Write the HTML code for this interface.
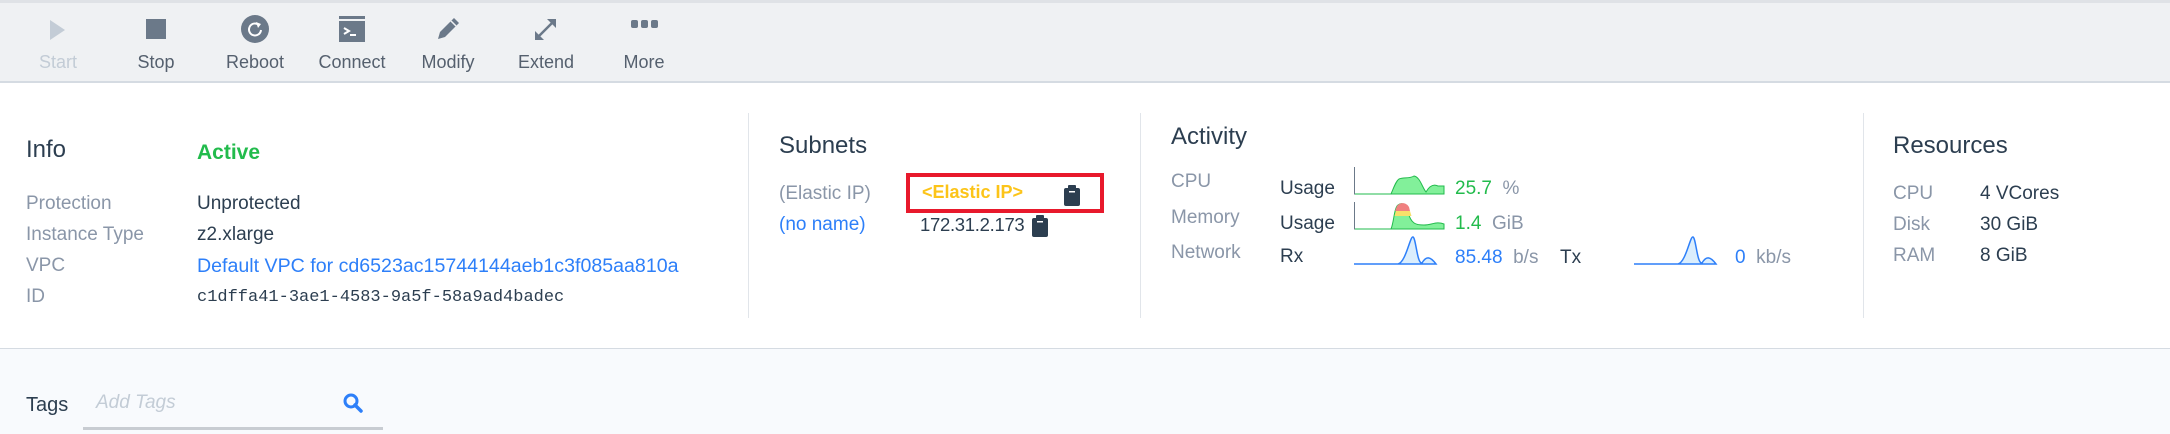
<!DOCTYPE html>
<html><head><meta charset="utf-8"><style>
*{margin:0;padding:0;box-sizing:border-box}
body{width:2170px;height:434px;overflow:hidden;background:#fff;font-family:"Liberation Sans",sans-serif;position:relative;color:#2c3e50}
.a{position:absolute;white-space:nowrap}
.tb{position:absolute;left:0;top:3px;width:2170px;height:80px;background:#eff1f3;border-bottom:2px solid #d5dbe2}
.top{position:absolute;left:0;top:0;width:2170px;height:3px;background:#dfe2e6}
.lbl{font-size:18px;color:#55606e;transform:translateX(-50%);top:52px}
.l{color:#8a96a8;font-size:19px}
.v{color:#2c3e50;font-size:19px}
.h{font-size:24px;color:#2c3e50}
.div{position:absolute;width:1px;background:#e1e5ea;top:113px;height:205px}
</style></head><body>
<div class="top"></div>
<div class="tb"></div>
<svg class="a" style="left:48px;top:18px" width="20" height="24"><path d="M2 2 L17 12 L2 22Z" fill="#c3ccd6"/></svg>
<div class="a" style="left:146px;top:19px;width:20px;height:20px;background:#6b7989"></div>
<svg class="a" style="left:241px;top:15px" width="28" height="28"><circle cx="14" cy="14" r="14" fill="#6b7989"/><path d="M18 10 A6 6 0 1 0 20 15" stroke="#fff" stroke-width="2" fill="none"/><path d="M15 7 L20 9 L17 13Z" fill="#fff"/></svg>
<svg class="a" style="left:339px;top:16px" width="26" height="26"><rect x="0" y="0" width="26" height="26" fill="#6b7989"/><rect x="0" y="3" width="26" height="2" fill="#eff1f3"/><rect x="2" y="7" width="22" height="17" fill="#6b7989"/><path d="M5 12 L10 15 L5 18" stroke="#fff" stroke-width="2" fill="none"/><rect x="11" y="18" width="6" height="2" fill="#fff"/></svg>
<svg class="a" style="left:435px;top:15px" width="27" height="27"><path d="M3 24 L5 17 L19 3 L24 8 L10 22Z" fill="#6b7989"/><path d="M16 6 L21 11" stroke="#eff1f3" stroke-width="1.5"/></svg>
<svg class="a" style="left:533px;top:17px" width="25" height="25"><path d="M3 22 L22 3" stroke="#6b7989" stroke-width="2.5"/><path d="M14 2 H23 V11Z M2 14 V23 H11Z" fill="#6b7989"/></svg>
<svg class="a" style="left:631px;top:19px" width="27" height="10"><rect x="0" y="1" width="7" height="8" rx="2" fill="#6b7989"/><rect x="10" y="1" width="7" height="8" rx="2" fill="#6b7989"/><rect x="20" y="1" width="7" height="8" rx="2" fill="#6b7989"/></svg>
<div class="a lbl" style="left:58px;color:#c3ccd6">Start</div>
<div class="a lbl" style="left:156px">Stop</div>
<div class="a lbl" style="left:255px">Reboot</div>
<div class="a lbl" style="left:352px">Connect</div>
<div class="a lbl" style="left:448px">Modify</div>
<div class="a lbl" style="left:546px">Extend</div>
<div class="a lbl" style="left:644px">More</div>

<div class="a h" style="left:26px;top:136px">Info</div>
<div class="a" style="left:197px;top:141px;font-size:21px;font-weight:bold;color:#22bb4c">Active</div>
<div class="a l" style="left:26px;top:193px">Protection</div>
<div class="a l" style="left:26px;top:224px">Instance Type</div>
<div class="a l" style="left:26px;top:255px">VPC</div>
<div class="a l" style="left:26px;top:286px">ID</div>
<div class="a v" style="left:197px;top:193px">Unprotected</div>
<div class="a v" style="left:197px;top:224px">z2.xlarge</div>
<div class="a v" style="left:197px;top:255px;color:#2d7ff9;font-size:19.6px">Default VPC for cd6523ac15744144aeb1c3f085aa810a</div>
<div class="a v" style="left:197px;top:288px;font-family:'Liberation Mono',monospace;font-size:17px">c1dffa41-3ae1-4583-9a5f-58a9ad4badec</div>

<div class="div" style="left:748px"></div>
<div class="a h" style="left:779px;top:132px">Subnets</div>
<div class="a l" style="left:779px;top:183px">(Elastic IP)</div>
<div class="a l" style="left:779px;top:214px;color:#2d7ff9">(no name)</div>
<div class="a" style="left:906px;top:173px;width:198px;height:40px;border:4px solid #e8192c"></div>
<div class="a" style="left:922px;top:182px;font-size:18px;font-weight:bold;color:#fcc419">&lt;Elastic IP&gt;</div>
<svg class="a" style="left:1064px;top:185px" width="16" height="21"><rect x="0" y="3" width="16" height="18" rx="2" fill="#2c3e50"/><rect x="4" y="0" width="8" height="5" rx="1" fill="#2c3e50"/><rect x="5" y="6" width="6" height="1.5" fill="#fff"/></svg>
<div class="a v" style="left:920px;top:214px;font-size:18.5px;letter-spacing:-0.3px">172.31.2.173</div>
<svg class="a" style="left:1032px;top:215px" width="16" height="22"><rect x="0" y="3" width="16" height="19" rx="2" fill="#2c3e50"/><rect x="4" y="0" width="8" height="5" rx="1" fill="#2c3e50"/><rect x="5" y="6" width="6" height="1.5" fill="#fff"/></svg>

<div class="div" style="left:1140px"></div>
<div class="a h" style="left:1171px;top:123px">Activity</div>
<div class="a l" style="left:1171px;top:171px">CPU</div>
<div class="a l" style="left:1171px;top:207px">Memory</div>
<div class="a l" style="left:1171px;top:242px">Network</div>
<div class="a v" style="left:1280px;top:178px">Usage</div>
<div class="a v" style="left:1280px;top:213px">Usage</div>
<div class="a v" style="left:1280px;top:246px">Rx</div>
<svg class="a" style="left:1354px;top:167px" width="92" height="28"><path d="M37 27 C40 20,42 14,45 12 C50 10,55 12,60 9 C66 10,68 20,72 25 C76 18,80 17,84 19 L90 19 L90 27Z" fill="#82f09a" stroke="#22bb4c" stroke-width="1"/><path d="M0.5 0 V27 H37" stroke="#6b7989" stroke-width="1" fill="none"/><path d="M1 27H37" stroke="#22bb4c"/></svg>
<svg class="a" style="left:1354px;top:202px" width="92" height="28"><path d="M37 27 C40 20,40 6,44 3 C48 0,52 2,54 10 C57 22,62 23,70 23 C78 23,82 19,90 22 L90 27Z" fill="#82f09a" stroke="#22bb4c" stroke-width="1"/><path d="M41 9 L56 9 L55 5 C52 0,46 0,43 4Z" fill="#f08080"/><path d="M40.5 14 L57.5 14 L56 9 L42 9Z" fill="#f7e06a"/><path d="M0.5 0 V27 H37" stroke="#6b7989" stroke-width="1" fill="none"/><path d="M1 27H37" stroke="#22bb4c"/></svg>
<svg class="a" style="left:1354px;top:236px" width="92" height="30"><path d="M0 28 H44 C52 26,56 0,59 1 C62 2,63 28,68 27 C72 20,76 20,82 28Z" fill="#dbeefd" stroke="#2d7ff9" stroke-width="1.5"/></svg>
<svg class="a" style="left:1634px;top:236px" width="92" height="30"><path d="M0 28 H44 C52 26,56 0,59 1 C62 2,63 28,68 27 C72 20,76 20,82 28Z" fill="#dbeefd" stroke="#2d7ff9" stroke-width="1.5"/></svg>
<div class="a" style="left:1455px;top:178px;font-size:19px;color:#22bb4c">25.7 <span style="color:#8a96a8">&nbsp;%</span></div>
<div class="a" style="left:1455px;top:213px;font-size:19px;color:#22bb4c">1.4 <span style="color:#8a96a8">&nbsp;GiB</span></div>
<div class="a" style="left:1455px;top:247px;font-size:19px;color:#2d7ff9">85.48 <span style="color:#8a96a8">&nbsp;b/s</span></div>
<div class="a v" style="left:1560px;top:247px">Tx</div>
<div class="a" style="left:1735px;top:247px;font-size:19px;color:#2d7ff9">0 <span style="color:#8a96a8">&nbsp;kb/s</span></div>

<div class="div" style="left:1863px"></div>
<div class="a h" style="left:1893px;top:132px">Resources</div>
<div class="a l" style="left:1893px;top:183px">CPU</div>
<div class="a l" style="left:1893px;top:214px">Disk</div>
<div class="a l" style="left:1893px;top:245px">RAM</div>
<div class="a v" style="left:1980px;top:183px">4 VCores</div>
<div class="a v" style="left:1980px;top:214px">30 GiB</div>
<div class="a v" style="left:1980px;top:245px">8 GiB</div>

<div class="a" style="left:0;top:348px;width:2170px;height:86px;background:#f8fafd;border-top:1px solid #d5dbe2"></div>
<div class="a v" style="left:26px;top:394px;font-size:20px">Tags</div>
<div class="a" style="left:96px;top:392px;font-size:19px;font-style:italic;color:#c3ccd6">Add Tags</div>
<svg class="a" style="left:343px;top:393px" width="20" height="20"><circle cx="8" cy="8" r="6" stroke="#2d7ff9" stroke-width="3" fill="none"/><path d="M12 12 L18 18" stroke="#2d7ff9" stroke-width="3.5" stroke-linecap="round"/></svg>
<div class="a" style="left:83px;top:427px;width:300px;height:3px;background:#c8ccd2"></div>
</body></html>
